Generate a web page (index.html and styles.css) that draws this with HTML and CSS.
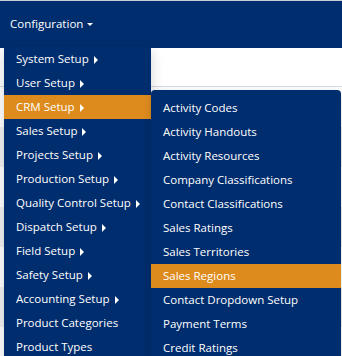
FILE: index.html
```html
<!DOCTYPE html>
<html lang="en">
  <head>
    <title>Configuration</title>
    <link rel="stylesheet" href="styles.css">
  </head>
  <body>
    <!-- Top navigation -->
    <div class="navbar">
      <div class="nav-item">
        Configuration <span class="caret"></span>

        <ul class="dropdown">
          <li class="has-sub">System Setup <span class="arrow"></span></li>
          <li class="has-sub">User Setup <span class="arrow"></span></li>
          <li class="has-sub active">
            CRM Setup <span class="arrow"></span>
            <ul class="submenu">
              <li>Activity Codes</li>
              <li>Activity Handouts</li>
              <li>Activity Resources</li>
              <li>Company Classifications</li>
              <li>Contact Classifications</li>
              <li>Sales Ratings</li>
              <li>Sales Territories</li>
              <li class="active">Sales Regions</li>
              <li>Contact Dropdown Setup</li>
              <li>Payment Terms</li>
              <li>Credit Ratings</li>
            </ul>
          </li>
          <li class="has-sub">Sales Setup <span class="arrow"></span></li>
          <li class="has-sub">Projects Setup <span class="arrow"></span></li>
          <li class="has-sub">Production Setup <span class="arrow"></span></li>
          <li class="has-sub">Quality Control Setup <span class="arrow"></span></li>
          <li class="has-sub">Dispatch Setup <span class="arrow"></span></li>
          <li class="has-sub">Field Setup <span class="arrow"></span></li>
          <li class="has-sub">Safety Setup <span class="arrow"></span></li>
          <li class="has-sub">Accounting Setup <span class="arrow"></span></li>
          <li>Product Categories</li>
          <li>Product Types</li>
        </ul>
      </div>
    </div>

    <!-- Page content behind the menu -->
    <div class="toolbar"></div>
    <div class="rows">
      <div class="row"></div>
      <div class="row odd"></div>
      <div class="row"></div>
      <div class="row odd"></div>
      <div class="row"></div>
      <div class="row odd"></div>
      <div class="row"></div>
    </div>
  </body>
</html>
```

FILE: styles.css
```css
body {
  margin: 0;
  background-color: white;
  font-family: "Open Sans", "Noto Sans", sans-serif;
  font-size: 11.5px;
  color: white;
  overflow: hidden;
}
ul {
  list-style: none;
  margin: 0;
  padding: 0;
}
.navbar {
  background-color: #002d6e;
  border-top: 1px solid #c9ced6;
  height: 47px;
}
.nav-item {
  position: relative;
  display: inline-block;
  padding-left: 10px;
  line-height: 46px;
}
.caret {
  display: inline-block;
  width: 0;
  height: 0;
  margin-left: 1px;
  vertical-align: middle;
  border-top: 3px solid white;
  border-left: 3px solid transparent;
  border-right: 3px solid transparent;
}
.arrow {
  display: inline-block;
  width: 0;
  height: 0;
  margin-left: 2px;
  vertical-align: -1px;
  border-left: 4px solid white;
  border-top: 4px solid transparent;
  border-bottom: 4px solid transparent;
}
.dropdown {
  position: absolute;
  left: 4px;
  top: 46px;
  width: 147px;
  background-color: #002d6e;
  box-shadow: 0 4px 12px rgba(0, 0, 0, 0.18);
  line-height: 24px;
}
.dropdown li {
  position: relative;
  padding: 0 12px;
  white-space: nowrap;
}
.dropdown li.active {
  background-color: #dd8b1d;
}
.submenu {
  position: absolute;
  left: 147px;
  top: -5px;
  width: 190px;
  padding-top: 6px;
  background-color: #002d6e;
  border-radius: 4px;
  box-shadow: 0 2px 8px rgba(0, 0, 0, 0.15);
}
.toolbar {
  height: 38px;
  border-bottom: 1px solid #d5dbe2;
}
.row {
  height: 40px;
}
.row.odd {
  background-color: #f1f1f1;
}
```
